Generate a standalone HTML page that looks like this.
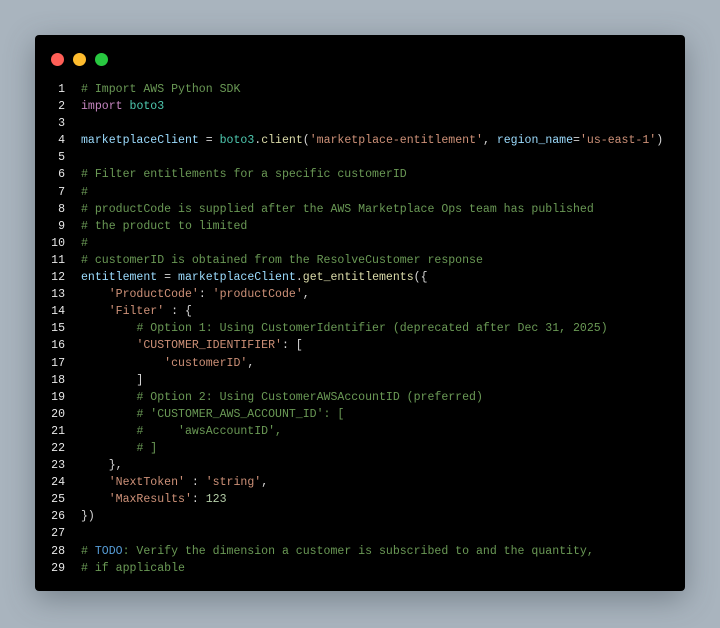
<!DOCTYPE html>
<html><head><meta charset="utf-8"><style>
html,body{margin:0;padding:0;}
body{width:720px;height:628px;background:#a9b4be;position:relative;overflow:hidden;}
.win{position:absolute;left:35px;top:35px;width:650px;height:556px;background:#000;border-radius:4px;box-shadow:0 8px 30px rgba(60,70,80,.45);}
.dot{position:absolute;top:18px;width:13px;height:13px;border-radius:50%;}
.code{position:absolute;left:0;top:46px;font-family:"Liberation Mono",monospace;font-size:11.55px;line-height:17.1px;color:#d4d4d4;white-space:pre;}
.ln{display:inline-block;width:30px;text-align:right;color:#e8e8e8;margin-right:16px;}
.c{color:#6a9955}.k{color:#c586c0}.t{color:#4ec9b0}.v{color:#9cdcfe}.s{color:#ce9178}.n{color:#b5cea8}.f{color:#dcdcaa}.td{color:#569cd6}
</style></head><body>
<div class="win">
<div class="dot" style="left:16px;background:#ff5f57"></div>
<div class="dot" style="left:38px;background:#febc2e"></div>
<div class="dot" style="left:60px;background:#28c840"></div>
<div class="code"><div><span class="ln">1</span><span class="c"># Import AWS Python SDK</span></div><div><span class="ln">2</span><span class="k">import</span> <span class="t">boto3</span></div><div><span class="ln">3</span></div><div><span class="ln">4</span><span class="v">marketplaceClient</span> = <span class="t">boto3</span>.<span class="f">client</span>(<span class="s">'marketplace-entitlement'</span>, <span class="v">region_name</span>=<span class="s">'us-east-1'</span>)</div><div><span class="ln">5</span></div><div><span class="ln">6</span><span class="c"># Filter entitlements for a specific customerID</span></div><div><span class="ln">7</span><span class="c">#</span></div><div><span class="ln">8</span><span class="c"># productCode is supplied after the AWS Marketplace Ops team has published</span></div><div><span class="ln">9</span><span class="c"># the product to limited</span></div><div><span class="ln">10</span><span class="c">#</span></div><div><span class="ln">11</span><span class="c"># customerID is obtained from the ResolveCustomer response</span></div><div><span class="ln">12</span><span class="v">entitlement</span> = <span class="v">marketplaceClient</span>.<span class="f">get_entitlements</span>({</div><div><span class="ln">13</span>    <span class="s">'ProductCode'</span>: <span class="s">'productCode'</span>,</div><div><span class="ln">14</span>    <span class="s">'Filter'</span> : {</div><div><span class="ln">15</span>        <span class="c"># Option 1: Using CustomerIdentifier (deprecated after Dec 31, 2025)</span></div><div><span class="ln">16</span>        <span class="s">'CUSTOMER_IDENTIFIER'</span>: [</div><div><span class="ln">17</span>            <span class="s">'customerID'</span>,</div><div><span class="ln">18</span>        ]</div><div><span class="ln">19</span>        <span class="c"># Option 2: Using CustomerAWSAccountID (preferred)</span></div><div><span class="ln">20</span>        <span class="c"># 'CUSTOMER_AWS_ACCOUNT_ID': [</span></div><div><span class="ln">21</span>        <span class="c">#     'awsAccountID',</span></div><div><span class="ln">22</span>        <span class="c"># ]</span></div><div><span class="ln">23</span>    },</div><div><span class="ln">24</span>    <span class="s">'NextToken'</span> : <span class="s">'string'</span>,</div><div><span class="ln">25</span>    <span class="s">'MaxResults'</span>: <span class="n">123</span></div><div><span class="ln">26</span>})</div><div><span class="ln">27</span></div><div><span class="ln">28</span><span class="c"># <span class="td">TODO</span>: Verify the dimension a customer is subscribed to and the quantity,</span></div><div><span class="ln">29</span><span class="c"># if applicable</span></div></div>
</div>
</body></html>
